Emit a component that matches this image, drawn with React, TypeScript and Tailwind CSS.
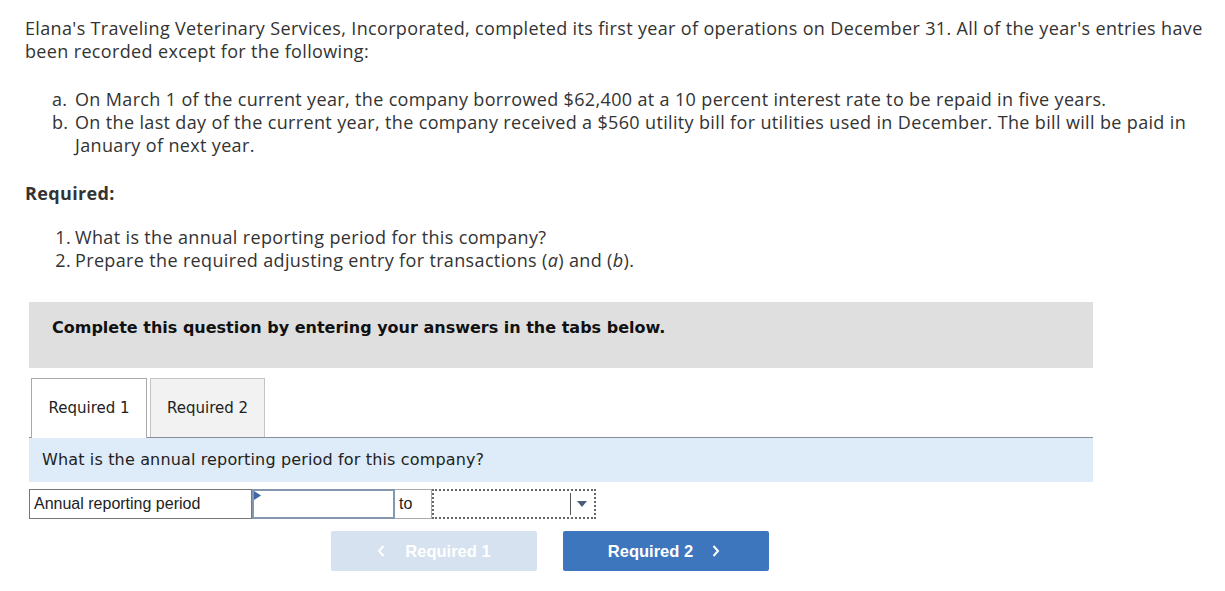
import React from "react";

const body = "font-['Open_Sans','Lato',sans-serif] text-[18px] leading-[23px] tracking-[0.35px] text-[#333]";
const verdana = "font-['DejaVu_Sans','Verdana',sans-serif]";
const arial = "font-['Liberation_Sans','Arial',sans-serif]";

const App = () => {
  return (
    <div className="w-[1225px] h-[591px] bg-white overflow-hidden">
      <div className={`${body} pl-[25px] pt-[17px]`}>
        <p>
          Elana's Traveling Veterinary Services, Incorporated, completed its first year of operations on December 31. All of the year's entries have
          <br />
          been recorded except for the following:
        </p>

        <ol className="mt-[25px] pl-[27px]">
          <li className="flex">
            <span className="w-[23px] shrink-0">a.</span>
            <span>On March 1 of the current year, the company borrowed $62,400 at a 10 percent interest rate to be repaid in five years.</span>
          </li>
          <li className="flex">
            <span className="w-[23px] shrink-0">b.</span>
            <span>
              On the last day of the current year, the company received a $560 utility bill for utilities used in December. The bill will be paid in
              <br />
              January of next year.
            </span>
          </li>
        </ol>

        <p className="mt-[25px] font-bold">Required:</p>

        <ol className="mt-[21px] pl-[27px]">
          <li className="flex">
            <span className="w-[23px] shrink-0 text-right pr-[4px]">1.</span>
            <span>What is the annual reporting period for this company?</span>
          </li>
          <li className="flex">
            <span className="w-[23px] shrink-0 text-right pr-[4px]">2.</span>
            <span>
              Prepare the required adjusting entry for transactions (<i>a</i>) and (<i>b</i>).
            </span>
          </li>
        </ol>
      </div>

      <div className="ml-[29px] w-[1064px] mt-[30px]">
        <div className={`h-[66px] bg-[#dfdfdf] pt-[16px] pl-[23px] ${verdana} text-[16px] leading-[20px] font-bold text-[#111]`}>
          Complete this question by entering your answers in the tabs below.
        </div>

        <div className={`mt-[9px] flex items-end gap-[3px] pl-[2px] ${verdana} text-[15px] text-[#222]`}>
          <div className="w-[116px] h-[60px] bg-white border border-b-0 border-[#aaa] flex items-center justify-center relative top-[1px]">
            Required 1
          </div>
          <div className="w-[115px] h-[59px] bg-[#f2f2f2] border border-b-0 border-[#c4c4c4] flex items-center justify-center">
            Required 2
          </div>
        </div>
        <div className="border-t border-[#8a8f96]" />

        <div className={`h-[44px] bg-[#ddecf8] flex items-center pl-[13px] ${verdana} text-[16px] tracking-[0.15px] text-[#222]`}>
          What is the annual reporting period for this company?
        </div>

        <div className={`mt-[7px] flex h-[30px] ${arial} text-[16px] text-[#222]`}>
          <div className="w-[223px] border border-[#777] flex items-center pl-[4px]">Annual reporting period</div>
          <div className="w-[143px] border-2 border-[#8497ad] relative">
            <svg className="absolute left-0 top-0" width="7" height="9" viewBox="0 0 7 9">
              <path d="M0 0 L7 4.5 L0 9 Z" fill="#3f67a8" />
            </svg>
          </div>
          <div className="w-[37px] border-y border-r border-[#aaa] flex items-center pl-[4px]">to</div>
          <div className="w-[164px] border-2 border-dotted border-[#666] relative flex items-center justify-end pr-[2px]">
            <div className="h-[22px] border-l border-[#555] w-[22px] flex items-center justify-center">
              <svg width="10" height="6" viewBox="0 0 10 6">
                <path d="M0 0 L10 0 L5 6 Z" fill="#4a5d78" />
              </svg>
            </div>
          </div>
        </div>

        <div className={`mt-[12px] flex gap-[26px] pl-[302px] ${arial} text-[16.5px] font-bold`}>
          <button className="w-[206px] h-[40px] rounded-[2px] bg-[#d6e2ef] text-white flex items-center justify-center gap-[20px]">
            <svg width="8" height="12" viewBox="0 0 8 12">
              <path d="M6.5 1 L2 6 L6.5 11" stroke="#fff" strokeWidth="2" fill="none" />
            </svg>
            Required 1
          </button>
          <button className="w-[206px] h-[40px] rounded-[2px] bg-[#3e76bd] text-white flex items-center justify-center gap-[19px] pr-[4px]">
            Required 2
            <svg width="8" height="12" viewBox="0 0 8 12">
              <path d="M1.5 1 L6 6 L1.5 11" stroke="#fff" strokeWidth="2" fill="none" />
            </svg>
          </button>
        </div>
      </div>
    </div>
  );
};

export default App;
